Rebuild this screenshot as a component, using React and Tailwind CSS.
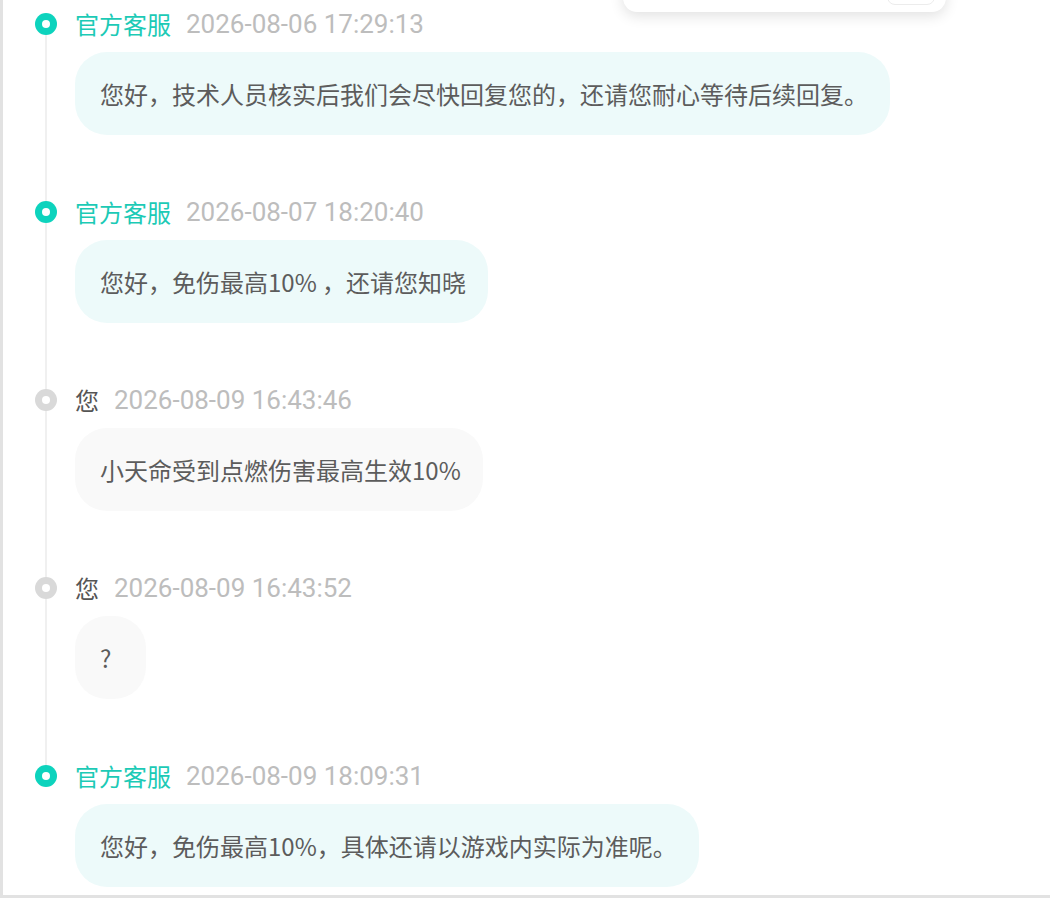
import React from "react";

const items = [
  { who: "官方客服", staff: true, time: "2026-08-06 17:29:13", text: "您好，技术人员核实后我们会尽快回复您的，还请您耐心等待后续回复。" },
  { who: "官方客服", staff: true, time: "2026-08-07 18:20:40", text: "您好，免伤最高10% ，还请您知晓" },
  { who: "您", staff: false, time: "2026-08-09 16:43:46", text: "小天命受到点燃伤害最高生效10%" },
  { who: "您", staff: false, time: "2026-08-09 16:43:52", text: "?" },
  { who: "官方客服", staff: true, time: "2026-08-09 18:09:31", text: "您好，免伤最高10%，具体还请以游戏内实际为准呢。" },
];

function Item({ item, last }) {
  return (
    <div className="flex">
      <div className="flex flex-col items-center w-[22px] shrink-0">
        <div className={"w-[22px] h-[22px] rounded-full flex items-center justify-center " + (item.staff ? "bg-[#0dd3bd]" : "bg-[#d9d9d9]")}>
          <div className="w-[8px] h-[8px] rounded-full bg-white" />
        </div>
        {!last && <div className="flex-1 w-[2px] bg-[#f0f0f0]" />}
      </div>
      <div className={"ml-[18px] flex flex-col items-start " + (last ? "pb-[10px]" : "pb-[66px]")}>
        <div className="h-[22px] flex items-center whitespace-nowrap">
          <span className={"text-[24px] leading-[22px] " + (item.staff ? "text-[#1ccab6]" : "text-[#555]")}>{item.who}</span>
          <span
            className="ml-[15px] text-[26px] leading-[22px] text-[#bdbdbd]"
            style={{ fontFamily: 'Roboto, "Noto Sans", sans-serif' }}
          >
            {item.time}
          </span>
        </div>
        <div className={"mt-[17px] min-w-[71px] rounded-[32px] pl-[25px] pr-[22px] py-[25px] text-[24px] leading-[33px] text-[#5c5c5c] whitespace-nowrap " + (item.staff ? "bg-[#edfafa]" : "bg-[#f9f9f9]")}>
          {item.text}
        </div>
      </div>
    </div>
  );
}

export default function App() {
  return (
    <div
      className="relative w-[1050px] h-[898px] overflow-hidden bg-white border-l-[3px] border-b-[3px] border-[#e2e2e2]"
      style={{ fontFamily: '"Noto Sans CJK SC", "Noto Sans", sans-serif' }}
    >
      <div className="absolute left-[620px] top-[-40px] w-[323px] h-[52px] bg-white rounded-[14px] shadow-[0_4px_14px_rgba(0,0,0,0.12)]">
        <div className="absolute right-[11px] bottom-[7px] w-[48px] h-[30px] rounded-[8px] border border-[#ececec]" />
      </div>
      <div className="pl-[32px] pt-[13px]">
        {items.map((it, i) => (
          <Item key={i} item={it} last={i === items.length - 1} />
        ))}
      </div>
    </div>
  );
}
